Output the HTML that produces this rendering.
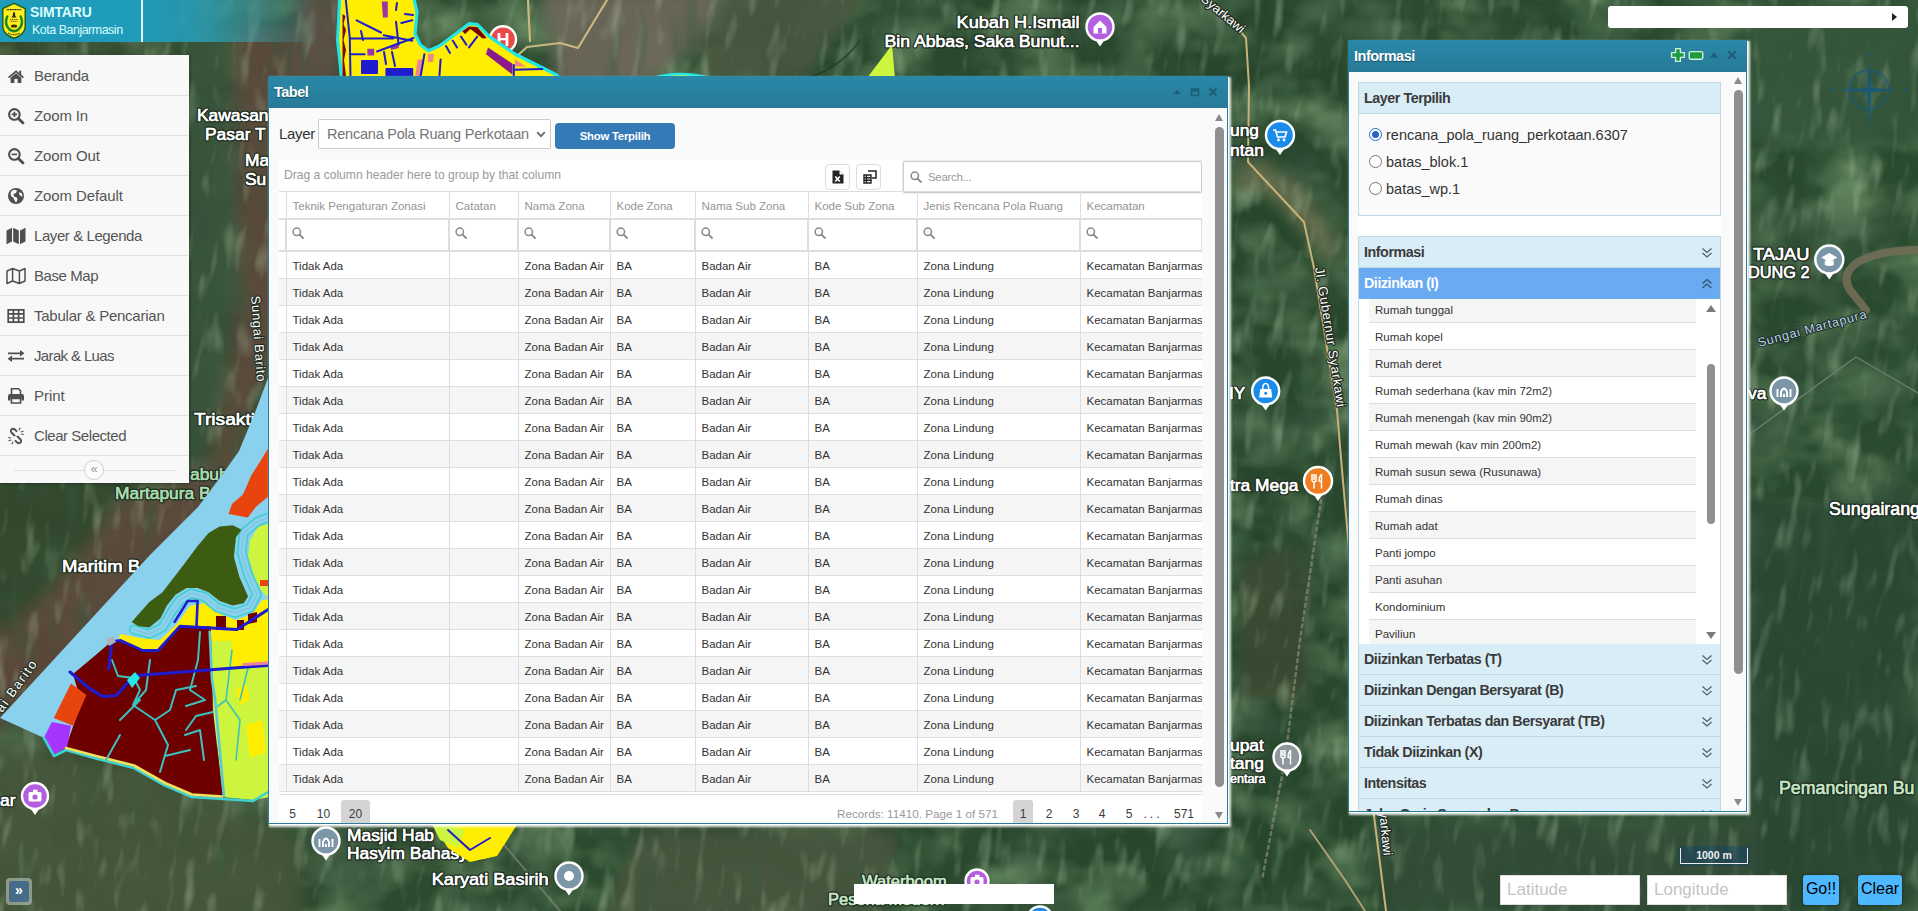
<!DOCTYPE html>
<html lang="id">
<head>
<meta charset="utf-8">
<title>SIMTARU Kota Banjarmasin</title>
<style>
*{box-sizing:border-box;margin:0;padding:0}
html,body{width:1918px;height:911px;overflow:hidden;background:#2f4a33;font-family:"Liberation Sans",sans-serif;}
#map{position:absolute;left:0;top:0;width:1918px;height:911px;}
#map svg{display:block}
.m2{font-family:"Liberation Sans",sans-serif;stroke-width:.45px}
.ml{font-family:"Liberation Sans",sans-serif;fill:#fff;stroke:#1d2a1f;stroke-width:3px;paint-order:stroke fill;stroke-linejoin:round}

/* header */
#hdr{position:absolute;left:0;top:0;width:330px;height:42px;background:linear-gradient(90deg,#1f9bbb 0,#1f9bbb 142px,rgba(31,155,187,.95) 145px,rgba(40,160,185,.85) 200px,rgba(60,165,180,.55) 250px,rgba(80,160,160,0) 320px);}
#hdr .div{position:absolute;left:141px;top:0;width:2px;height:42px;background:#e8f4f7}
#hdr .t1{position:absolute;left:30px;top:4px;font-size:14px;font-weight:bold;color:#d9fdff;letter-spacing:-.15px}
#hdr .t2{position:absolute;left:32px;top:23px;font-size:12.4px;color:#d9fdff;letter-spacing:-.45px}
#logo{position:absolute;left:0;top:0}

/* sidebar */
#side{position:absolute;left:0;top:55px;width:189px;height:428px;padding-top:1px;background:#f8f8f8;box-shadow:1px 1px 3px rgba(0,0,0,.35)}
#side .it{position:relative;height:40px;border-bottom:1px solid #e2e2e2;color:#555;font-size:15px;line-height:40px;padding-left:34px;white-space:nowrap}
#side .it svg{position:absolute;left:7px;top:11px}
#side .ft{position:relative;height:28px}
#side .ft .ln{position:absolute;left:14px;right:14px;top:14px;height:1px;background:#e2e2e2}
#side .ft .bt{position:absolute;left:84px;top:4px;width:20px;height:20px;border-radius:50%;background:#fcfcfc;border:1px solid #cfcfcf;color:#999;font-size:13px;line-height:16px;text-align:center}

/* windows */
.win{position:absolute;background:#fafafa;border:1px solid #2a7d9a;border-top:none;box-shadow:1px 1px 0 #fbfdfd,2px 2px 2px 1px rgba(255,255,255,.85);overflow:hidden}
.win .tb{position:absolute;left:0;top:0;right:0;height:32px;background:linear-gradient(#2b88a8,#267a98)}
.win .tt{position:absolute;left:5px;top:8px;font-size:14.5px;font-weight:bold;color:#fff;letter-spacing:-.5px;text-shadow:0 1px 1px rgba(0,0,0,.4)}
.win .wi{position:absolute;top:11px}
#tabel{left:268px;top:76px;width:960px;height:748px}
#tabel .bd{position:absolute;left:0;top:32px;right:0;bottom:0}
#tabel .lb{position:absolute;left:10px;top:17px;font-size:15px;color:#333;letter-spacing:-.35px}
#tabel .sel{position:absolute;left:49px;top:11px;width:233px;height:30px;border:1px solid #ccc;border-radius:2px;background:#fff;color:#757575;font-size:14.5px;line-height:29px;padding-left:8px;white-space:nowrap;letter-spacing:-.22px}
#tabel .sel svg{position:absolute;right:4px;top:11px}
#tabel .btn{position:absolute;left:286px;top:15px;width:120px;height:26px;background:#337ab7;border-radius:4px;color:#fff;font-size:11.4px;font-weight:bold;line-height:27px;text-align:center;letter-spacing:-.25px}
#tabel .grid{position:absolute;left:10px;top:52px;width:923px;height:700px;background:#fff;overflow:hidden;font-size:11.5px}
.drag{position:absolute;left:5px;top:8px;color:#999;font-size:12.1px}
.eb{position:absolute;top:4px;width:25px;height:26px;border:1px solid #ddd;border-radius:4px;background:#fff}
.eb svg{position:absolute;left:6px;top:5px}
.srch{position:absolute;left:624px;top:1px;width:299px;height:32px;border:1px solid #ccc;border-radius:2px;background:#fff;box-shadow:0 0 0 1px #eee;color:#999;line-height:30px}
.srch .mg{position:absolute;left:6px;top:9px}
.srch span{position:absolute;left:24px;top:0;letter-spacing:-.3px}
#tabel table{position:absolute;left:0;top:31px;width:923px;border-collapse:collapse;table-layout:fixed}
#tabel td,#tabel th{border-left:1px solid #ddd;border-top:1px solid #ddd;padding:2px 0 0 6px;height:27px;white-space:nowrap;overflow:hidden;text-align:left;font-weight:normal;color:#333;font-size:11.5px}
#tabel td:first-child,#tabel th:first-child{border-left:none}
#tabel th{color:#959595;height:27px}
#tabel tr.f td{height:32px;padding:0;border:2px solid #ddd;border-left-width:2px;background:#fff}
#tabel tr.f td:first-child{border-left:none;border-right:none;background:#fff}
#tabel tr.a td{background:#f5f5f5}
#tabel tbody tr:last-child td{border-bottom:1px solid #ddd}
#tabel tbody tr:first-child td{height:28px}
.fb{position:relative;height:28px}
.fb .mg{position:absolute;left:5px;top:6px}
.pg{position:absolute;left:0;top:634px;width:923px;height:40px;border-top:1px solid #ddd;color:#3c3c3c;font-size:12px}
.pg span{position:absolute;top:5px;height:30px;line-height:28px;text-align:center}
.pg .ps{width:29px}.pg .pn{width:20px}
.pg .on{background:#d4d4d4;border-radius:3px}
.pg .inf{left:539px;color:#999;width:180px;text-align:right;white-space:nowrap;font-size:11.7px}
.sb{position:absolute;right:3px;top:4px;width:12px;bottom:2px}
.sb i{position:absolute;display:block}
.sb .up{left:3px;top:2px;border:4.5px solid transparent;border-bottom:7px solid #8a8a8a;border-top:none}
.sb .dn{left:3px;bottom:2px;border:4.5px solid transparent;border-top:7px solid #8a8a8a;border-bottom:none}
.sb .th{left:3px;width:9px;border-radius:4.5px;background:#8f8f8f}

#info{left:1348px;top:40px;width:399px;height:772px}
#info .bd{position:absolute;left:0;top:32px;right:0;bottom:0;overflow:hidden}
#info .pn1{position:absolute;left:9px;top:10px;width:363px;height:134px;border:1px solid #bcd9e4;background:#fafafa}
#info .ph{height:31px;background:#d9edf7;border-bottom:1px solid #bcd9e4;font-size:14.3px;font-weight:bold;color:#3a3a3a;line-height:30px;padding-left:5px;letter-spacing:-.45px}
#info .rd{position:absolute;left:27px;font-size:14.5px;color:#333;line-height:20px;white-space:nowrap}
#info .rd .r{position:absolute;left:-17px;top:3px;width:13px;height:13px;border:1px solid #767676;border-radius:50%;background:#fff}
#info .rd .r.on{border-color:#2a65c4}
#info .rd .r.on:after{content:"";position:absolute;left:2px;top:2px;width:7px;height:7px;border-radius:50%;background:#2a65c4}
#info .acc{position:absolute;left:9px;top:164px;width:363px;border:1px solid #bcd9e4;border-bottom:none;background:#fff}
#info .ah{position:relative;height:31px;background:#d9edf7;border-bottom:1px solid #bcd9e4;font-size:14.3px;font-weight:bold;color:#3a3a3a;line-height:30px;padding-left:5px;letter-spacing:-.45px;white-space:nowrap}
#info .ah.sel{background:#69aaf0;color:#fff;border-bottom-color:#69aaf0}
#info .cv{position:absolute;right:7px;top:10px}
#info .lst{position:relative;height:345px;overflow:hidden;background:#fff}
#info .lw{position:absolute;left:10px;top:-3px;width:327px}
#info .li{height:27px;border-bottom:1px solid #ddd;font-size:11.5px;color:#333;line-height:28px;padding-left:6px;background:#fff}
#info .li.a{background:#f5f5f5}
.sb2{position:absolute;right:4px;top:0;width:10px;bottom:0}
.sb2 i{position:absolute;display:block}
.sb2 .up{left:0;top:6px;border:5px solid transparent;border-bottom:7px solid #7a7a7a;border-top:none}
.sb2 .dn{left:0;bottom:5px;border:5px solid transparent;border-top:7px solid #7a7a7a;border-bottom:none}
.sb2 .th{left:1px;top:65px;width:8px;height:160px;border-radius:4px;background:#8f8f8f}
#info .sb{right:3px;top:5px;bottom:5px;width:10px}
#info .sb .th{width:9px}
#info .sb .up{left:1px;top:0;border-width:0 4.5px 7px 4.5px}
#info .sb .dn{left:1px;bottom:0;border-width:7px 4.5px 0 4.5px}
#info .sb .th{left:1px}

#topbox{position:absolute;left:1608px;top:6px;width:300px;height:22px;background:#fff;border-radius:3px}
#topbox i{position:absolute;right:11px;top:7px;border:4px solid transparent;border-left:5px solid #222;border-right:none}
#compass{position:absolute;left:1834px;top:50px;overflow:visible}
#scale{position:absolute;left:1678px;top:846px;width:72px;height:20px;background:rgba(0,60,136,.3);border-radius:4px;padding:2px}
#scale div{width:68px;height:16px;border:1px solid #eee;border-top:none;color:#eee;font-size:10.5px;font-weight:bold;text-align:center;line-height:15px}
.ll{position:absolute;top:875px;width:140px;height:30px;background:#fff;border:1px solid #ddd;color:#c4c4c4;font-size:17px;line-height:28px;padding-left:6px}
#lat{left:1500px}#lon{left:1647px}
.bb{position:absolute;top:875px;height:30px;background:#4db8ff;border-radius:3px;color:#000;font-size:16px;line-height:28px;text-align:center;box-shadow:0 0 3px rgba(0,0,0,.5)}
#go{left:1803px;width:36px}#clr{left:1858px;width:44px}
#botbox{position:absolute;left:854px;top:884px;width:200px;height:20px;background:#fff}
#ovb{position:absolute;left:6px;top:878px;width:26px;height:27px;background:rgba(255,255,255,.4);border-radius:4px;padding:3px}
#ovb div{width:20px;height:21px;background:rgba(0,60,136,.5);border-radius:2px;color:#fff;font-weight:bold;font-size:14px;line-height:19px;text-align:center}
</style>
</head>
<body>
<div id="map">
<svg width="1918" height="911" viewBox="0 0 1918 911">
<defs>
<linearGradient id="gbg" x1="0" y1="0" x2="1" y2="0">
<stop offset="0" stop-color="#38472d"/><stop offset=".12" stop-color="#2f4a2f"/><stop offset=".3" stop-color="#2b4a2e"/><stop offset=".65" stop-color="#27462c"/><stop offset="1" stop-color="#2a4a2f"/>
</linearGradient>
<filter id="bl8" x="-20%" y="-20%" width="140%" height="140%"><feGaussianBlur stdDeviation="8"/></filter>
<filter id="bl3" x="-20%" y="-20%" width="140%" height="140%"><feGaussianBlur stdDeviation="3"/></filter>
<filter id="bl1"><feGaussianBlur stdDeviation="0.7"/></filter>
<filter id="nz" x="0" y="0" width="100%" height="100%"><feTurbulence type="fractalNoise" baseFrequency="0.016 0.022" numOctaves="3" seed="7" result="n"/><feColorMatrix in="n" type="matrix" values="0 0 0 0 0.26  0 0 0 0 0.43  0 0 0 0 0.22  1.9 1.3 0 0 -1.38"/></filter>
<filter id="nz2" x="0" y="0" width="100%" height="100%"><feTurbulence type="fractalNoise" baseFrequency="0.014 0.02" numOctaves="3" seed="3" result="n"/><feColorMatrix in="n" type="matrix" values="0 0 0 0 0.06  0 0 0 0 0.12  0 0 0 0 0.07  -2.4 0 0 0 1.25"/></filter>
<filter id="nzw" x="0" y="0" width="100%" height="100%"><feTurbulence type="fractalNoise" baseFrequency="0.075 0.022" numOctaves="2" seed="11" result="n"/><feColorMatrix in="n" type="matrix" values="0 0 0 0 0.46  0 0 0 0 0.60  0 0 0 0 0.40  3.0 0 0 0 -1.68"/></filter>
<filter id="nzb" x="0" y="0" width="100%" height="100%"><feTurbulence type="fractalNoise" baseFrequency="0.05 0.012" numOctaves="2" seed="23" result="n"/><feColorMatrix in="n" type="matrix" values="0 0 0 0 0.04  0 0 0 0 0.10  0 0 0 0 0.05  -2.6 0 0 0 1.2"/></filter>
</defs>
<rect width="1918" height="911" fill="url(#gbg)"/>
<!-- MAPBG-S -->
<rect width="1918" height="911" filter="url(#nz)" opacity=".55"/>
<rect width="1918" height="911" filter="url(#nz2)" opacity=".6"/>
<g filter="url(#bl8)" opacity=".92">
<path d="M236 30 L240 290 L226 390 L208 466 L160 488 L120 500 L85 550 L40 600 L-20 650 L-20 740 L120 640 L230 480 L290 300 L345 30 Z" fill="#5b4a3a"/>
<path d="M-20 470 L150 470 L110 500 L75 550 L30 600 L-20 640 Z" fill="#30482f"/>
<path d="M180 30 L230 30 L234 290 L220 390 L202 462 L180 475 Z" fill="#37523a"/>
<path d="M-20 745 L120 765 L300 835 L300 930 L-20 930 Z" fill="#44573a"/>
<path d="M300 -10 L345 -10 L340 80 L290 80 Z" fill="#5d5044"/>
<path d="M540 -10 L720 -10 L700 40 L640 90 L560 90 Z" fill="#6e675a"/>
<path d="M720 -10 L870 -10 L800 80 L700 80 Z" fill="#48573f"/>
<path d="M640 830 L900 830 L880 920 L600 920 Z" fill="#46553d"/>
<path d="M1236 168 L1262 160 L1300 186 L1342 246 L1326 262 L1290 216 L1262 190 L1236 190 Z" fill="#687050"/>
<path d="M1240 560 L1300 540 L1310 700 L1240 700 Z" fill="#3a4a33"/>
<path d="M1750 0 L1918 0 L1918 140 L1750 140 Z" fill="#36563a"/>
<path d="M1750 500 L1918 500 L1918 911 L1750 911 Z" fill="#2a4731"/>
<path d="M1380 820 L1760 820 L1760 911 L1380 911 Z" fill="#304c36"/>
</g>
<g transform="rotate(7 960 455)"><rect x="-100" y="-150" width="2120" height="1220" filter="url(#nzw)" opacity=".38"/></g>
<rect width="1918" height="911" filter="url(#nzb)" opacity=".6"/>
<g fill="none" stroke-linecap="round" stroke-linejoin="round">
<path d="M1918 250 Q1880 250 1858 262 Q1840 274 1850 290 L1866 310" stroke="#716e57" stroke-width="8" filter="url(#bl1)" opacity=".9"/>
<path d="M1750 434 L1856 357 L1918 393" stroke="#6d7f6d" stroke-width="1.4"/>
<path d="M1321 500 L1300 640 L1285 760 L1262 880" stroke="#8a8873" stroke-width="2.5" stroke-dasharray="3 4" opacity=".7"/>
<path d="M1208 0 L1232 22 L1246 38 L1249 86 L1248 162 L1304 222 L1314 268 L1337 410 L1342 470 L1350 560 L1372 800 L1386 911" stroke="#c9b27a" stroke-width="2"/>
<path d="M528 0 L530 41 M607 0 L578 48 L560 43 L527 47 L517 56" stroke="#c9b882" stroke-width="2.2"/>
<path d="M1310 830 L1345 880 L1365 911" stroke="#c9b27a" stroke-width="2" opacity=".8"/>
<path d="M500 840 L560 911" stroke="#8a8f80" stroke-width="2" opacity=".6"/>
<path d="M860 40 Q840 70 800 80" stroke="#22382a" stroke-width="2" opacity=".7"/>
</g>
<!-- MAPBG-E -->
<!-- MAPLBL-S -->
<text class="ml" x="956.6" y="28" font-size="17.4" textLength="123" lengthAdjust="spacingAndGlyphs" style="fill:#fff;stroke-width:3px">Kubah H.Ismail</text><text class="m2" x="956.6" y="28" font-size="17.4" textLength="123" lengthAdjust="spacingAndGlyphs" style="fill:#fff;stroke:#fff">Kubah H.Ismail</text>
<text class="ml" x="884.6" y="47" font-size="17.4" textLength="195" lengthAdjust="spacingAndGlyphs" style="fill:#fff;stroke-width:3px">Bin Abbas, Saka Bunut...</text><text class="m2" x="884.6" y="47" font-size="17.4" textLength="195" lengthAdjust="spacingAndGlyphs" style="fill:#fff;stroke:#fff">Bin Abbas, Saka Bunut...</text>
<text class="ml" x="197" y="121" font-size="17.4" style="fill:#fff;stroke-width:3px">Kawasan</text><text class="m2" x="197" y="121" font-size="17.4" style="fill:#fff;stroke:#fff">Kawasan</text>
<text class="ml" x="205" y="140" font-size="17.4" style="fill:#fff;stroke-width:3px">Pasar T</text><text class="m2" x="205" y="140" font-size="17.4" style="fill:#fff;stroke:#fff">Pasar T</text>
<text class="ml" x="245" y="166" font-size="17.4" style="fill:#fff;stroke-width:3px">Ma</text><text class="m2" x="245" y="166" font-size="17.4" style="fill:#fff;stroke:#fff">Ma</text>
<text class="ml" x="245" y="185" font-size="17.4" style="fill:#fff;stroke-width:3px">Su</text><text class="m2" x="245" y="185" font-size="17.4" style="fill:#fff;stroke:#fff">Su</text>
<text class="ml" x="194" y="424.5" font-size="17.4" textLength="61" lengthAdjust="spacingAndGlyphs" style="fill:#fff;stroke-width:3px">Trisakti</text><text class="m2" x="194" y="424.5" font-size="17.4" textLength="61" lengthAdjust="spacingAndGlyphs" style="fill:#fff;stroke:#fff">Trisakti</text>
<text class="ml" x="190" y="480" font-size="17.4" style="fill:#a9dcae;stroke-width:3px">abuh</text><text class="m2" x="190" y="480" font-size="17.4" style="fill:#a9dcae;stroke:#a9dcae">abuh</text>
<text class="ml" x="115" y="499" font-size="17.4" style="fill:#a9dcae;stroke-width:3px">Martapura B</text><text class="m2" x="115" y="499" font-size="17.4" style="fill:#a9dcae;stroke:#a9dcae">Martapura B</text>
<text class="ml" x="62" y="572" font-size="17.4" textLength="78" lengthAdjust="spacingAndGlyphs" style="fill:#fff;stroke-width:3px">Maritim B</text><text class="m2" x="62" y="572" font-size="17.4" textLength="78" lengthAdjust="spacingAndGlyphs" style="fill:#fff;stroke:#fff">Maritim B</text>
<text class="ml" x="1230" y="136" font-size="17.4" style="fill:#fff;stroke-width:3px">ung</text><text class="m2" x="1230" y="136" font-size="17.4" style="fill:#fff;stroke:#fff">ung</text>
<text class="ml" x="1230" y="156" font-size="17.4" style="fill:#fff;stroke-width:3px">ntan</text><text class="m2" x="1230" y="156" font-size="17.4" style="fill:#fff;stroke:#fff">ntan</text>
<text class="ml" x="1229" y="399" font-size="17.4" style="fill:#fff;stroke-width:3px">IY</text><text class="m2" x="1229" y="399" font-size="17.4" style="fill:#fff;stroke:#fff">IY</text>
<text class="ml" x="1230" y="490.5" font-size="17.4" textLength="68.5" lengthAdjust="spacingAndGlyphs" style="fill:#fff;stroke-width:3px">tra Mega</text><text class="m2" x="1230" y="490.5" font-size="17.4" textLength="68.5" lengthAdjust="spacingAndGlyphs" style="fill:#fff;stroke:#fff">tra Mega</text>
<text class="ml" x="1230" y="751" font-size="17.4" style="fill:#fff;stroke-width:3px">upat</text><text class="m2" x="1230" y="751" font-size="17.4" style="fill:#fff;stroke:#fff">upat</text>
<text class="ml" x="1230" y="769" font-size="17.4" style="fill:#fff;stroke-width:3px">tang</text><text class="m2" x="1230" y="769" font-size="17.4" style="fill:#fff;stroke:#fff">tang</text>
<text class="ml" x="1230" y="783" font-size="12.5" style="fill:#fff;stroke-width:2.5px">entara</text><text class="m2" x="1230" y="783" font-size="12.5" style="fill:#fff;stroke:#fff">entara</text>
<text class="ml" x="1753" y="260" font-size="17.4" textLength="56.5" lengthAdjust="spacingAndGlyphs" style="fill:#fff;stroke-width:3px">TAJAU</text><text class="m2" x="1753" y="260" font-size="17.4" textLength="56.5" lengthAdjust="spacingAndGlyphs" style="fill:#fff;stroke:#fff">TAJAU</text>
<text class="ml" x="1748" y="278" font-size="17.4" textLength="61.5" lengthAdjust="spacingAndGlyphs" style="fill:#fff;stroke-width:3px">DUNG 2</text><text class="m2" x="1748" y="278" font-size="17.4" textLength="61.5" lengthAdjust="spacingAndGlyphs" style="fill:#fff;stroke:#fff">DUNG 2</text>
<text class="ml" x="1748" y="399" font-size="17.4" style="fill:#fff;stroke-width:3px">va</text><text class="m2" x="1748" y="399" font-size="17.4" style="fill:#fff;stroke:#fff">va</text>
<text class="ml" x="1829" y="515" font-size="17.8" style="fill:#fff;stroke-width:3px">Sungairang</text><text class="m2" x="1829" y="515" font-size="17.8" style="fill:#fff;stroke:#fff">Sungairang</text>
<text class="ml" x="1779" y="794" font-size="17.8" style="fill:#c4e3c4;stroke-width:3px">Pemancingan Bu</text><text class="m2" x="1779" y="794" font-size="17.8" style="fill:#c4e3c4;stroke:#c4e3c4">Pemancingan Bu</text>
<text class="ml" x="347" y="841" font-size="17.4" style="fill:#fff;stroke-width:3px">Masjid Hab</text><text class="m2" x="347" y="841" font-size="17.4" style="fill:#fff;stroke:#fff">Masjid Hab</text>
<text class="ml" x="347" y="859" font-size="17.4" style="fill:#fff;stroke-width:3px">Hasyim Bahasyim</text><text class="m2" x="347" y="859" font-size="17.4" style="fill:#fff;stroke:#fff">Hasyim Bahasyim</text>
<text class="ml" x="431.7" y="885" font-size="17.4" textLength="117" lengthAdjust="spacingAndGlyphs" style="fill:#fff;stroke-width:3px">Karyati Basirih</text><text class="m2" x="431.7" y="885" font-size="17.4" textLength="117" lengthAdjust="spacingAndGlyphs" style="fill:#fff;stroke:#fff">Karyati Basirih</text>
<text class="ml" x="862" y="887" font-size="16.5" style="fill:#c4e3c4;stroke-width:3px">Waterboom</text><text class="m2" x="862" y="887" font-size="16.5" style="fill:#c4e3c4;stroke:#c4e3c4">Waterboom</text>
<text class="ml" x="828" y="905" font-size="16.5" style="fill:#c4e3c4;stroke-width:3px">Pesona Modern</text><text class="m2" x="828" y="905" font-size="16.5" style="fill:#c4e3c4;stroke:#c4e3c4">Pesona Modern</text>
<text class="ml" x="0" y="806" font-size="17.4" style="fill:#fff;stroke-width:3px">ar</text><text class="m2" x="0" y="806" font-size="17.4" style="fill:#fff;stroke:#fff">ar</text>
<text class="ml" transform="translate(251,296) rotate(86)" font-size="13" textLength="86" lengthAdjust="spacing" style="fill:#fff;stroke-width:2.2px">Sungai Barito</text>
<text class="ml" transform="translate(2,713) rotate(-54)" font-size="13" textLength="60" lengthAdjust="spacing" style="fill:#fff;stroke-width:2.2px">ai Barito</text>
<text class="ml" transform="translate(1315,268) rotate(81)" font-size="13" textLength="141" lengthAdjust="spacing" style="fill:#fff;stroke-width:2.4px">Jl. Gubernur Syarkawi</text>
<text class="ml" transform="translate(1200,0) rotate(40)" font-size="13" style="fill:#fff;stroke-width:2.4px">Syarkawi</text>
<text class="ml" transform="translate(1379,812) rotate(84)" font-size="13" style="fill:#fff;stroke-width:2.4px">yarkawi</text>
<text class="ml" transform="translate(1759,347) rotate(-15)" font-size="12.5" textLength="112" lengthAdjust="spacing" style="fill:#b5d2ea;stroke-width:2px">Sungai Martapura</text>
<g transform="translate(1280,135)"><path d="M-7 10 L0 20 L7 10 Z" fill="#fff"/><circle r="14" fill="#1a8be8" stroke="#fff" stroke-width="2.4"/><path d="M-7 -5 H-4.500 L-2.500 2 H5 L6.500 -3 H-3.500" fill="none" stroke="#fff" stroke-width="1.700"/><circle cx="-1.500" cy="5" r="1.400" fill="#fff"/><circle cx="4" cy="5" r="1.400" fill="#fff"/></g>
<g transform="translate(1265.7,391)"><path d="M-7 9.5 L0 19.5 L7 9.5 Z" fill="#fff"/><circle r="13.5" fill="#1a8be8" stroke="#fff" stroke-width="2.4"/><path d="M-5.500 -2 H5.500 L6.500 6.500 H-6.500 Z" fill="#fff"/><path d="M-3 -2 Q-3 -7.500 0 -7.500 Q3 -7.500 3 -2" fill="none" stroke="#fff" stroke-width="1.500"/><circle cy="2.300" r="1.500" fill="#1a8be8"/></g>
<g transform="translate(1318,481)"><path d="M-7 10 L0 20 L7 10 Z" fill="#fff"/><circle r="14" fill="#f07d1f" stroke="#fff" stroke-width="2.4"/><path d="M-4 -7 V-1 M-2 -7 V-1 M-6 -7 V-1 Q-6 1 -4 1 Q-2 1 -2 -1 M-4 1 V7.500 M3.500 -7 Q1 -4 1 0 L3.500 1 V7.500 M3.500 -7 V1" fill="none" stroke="#fff" stroke-width="1.500"/></g>
<g transform="translate(1287,757)"><path d="M-7 9.5 L0 19.5 L7 9.5 Z" fill="#fff"/><circle r="13.5" fill="#8d979c" stroke="#fff" stroke-width="2.4"/><path d="M-4 -7 V-1 M-2 -7 V-1 M-6 -7 V-1 Q-6 1 -4 1 Q-2 1 -2 -1 M-4 1 V7.500 M3.500 -7 Q1 -4 1 0 L3.500 1 V7.500 M3.500 -7 V1" fill="none" stroke="#fff" stroke-width="1.500"/></g>
<g transform="translate(1829.3,259.5)"><path d="M-7 10 L0 20 L7 10 Z" fill="#fff"/><circle r="14" fill="#7b97a7" stroke="#fff" stroke-width="2.4"/><path d="M-8 -2 L0 -6.500 L8 -2 L0 2.500 Z" fill="#fff"/><path d="M-4.500 1 V5.500 Q0 7.500 4.500 5.500 V1" fill="#fff"/></g>
<g transform="translate(1784,391)"><path d="M-7 9.5 L0 19.5 L7 9.5 Z" fill="#fff"/><circle r="13.5" fill="#7b97a7" stroke="#fff" stroke-width="2.4"/><path d="M-6.500 6 V-2 M6.500 6 V-2 M-3 6 V1 Q0 -6 3 1 V6 M0 6 V3" fill="none" stroke="#fff" stroke-width="1.900"/></g>
<g transform="translate(1100,27)"><path d="M-7 9.5 L0 19.5 L7 9.5 Z" fill="#fff"/><circle r="13.5" fill="#b45fe0" stroke="#fff" stroke-width="2.4"/><path d="M-6.500 0 L0 -6.500 L6.500 0 V6.500 H-6.500 Z" fill="#fff"/><rect x="-2" y="1" width="4" height="5.500" fill="#b45fe0"/></g>
<g transform="translate(35,796)"><path d="M-7 9 L0 19 L7 9 Z" fill="#fff"/><circle r="13" fill="#b45fe0" stroke="#fff" stroke-width="2.4"/><rect x="-6.500" y="-4" width="13" height="9.500" rx="1.500" fill="#fff"/><circle cy="1" r="2.600" fill="#b45fe0"/><rect x="-2" y="-6.300" width="4.500" height="2.600" fill="#fff"/></g>
<g transform="translate(326,841)"><path d="M-7 9.5 L0 19.5 L7 9.5 Z" fill="#fff"/><circle r="13.5" fill="#7b97a7" stroke="#fff" stroke-width="2.4"/><path d="M-6.500 6 V-2 M6.500 6 V-2 M-3 6 V1 Q0 -6 3 1 V6 M0 6 V3" fill="none" stroke="#fff" stroke-width="1.900"/></g>
<g transform="translate(569,876)"><path d="M-7 9.5 L0 19.5 L7 9.5 Z" fill="#fff"/><circle r="13.5" fill="#7b97a7" stroke="#fff" stroke-width="2.4"/><circle r="5" fill="#fff"/></g>
<g transform="translate(977,881)"><path d="M-7 7.5 L0 17.5 L7 7.5 Z" fill="#fff"/><circle r="11.5" fill="#b45fe0" stroke="#fff" stroke-width="2.4"/><rect x="-6.500" y="-4" width="13" height="9.500" rx="1.500" fill="#fff"/><circle cy="1" r="2.600" fill="#b45fe0"/><rect x="-2" y="-6.300" width="4.500" height="2.600" fill="#fff"/></g>
<g transform="translate(1040,919)"><path d="M-7 8.5 L0 18.5 L7 8.5 Z" fill="#fff"/><circle r="12.5" fill="#1a8be8" stroke="#fff" stroke-width="2.4"/></g>
<g transform="translate(503,39.3)"><circle r="13" fill="#e84a4a" stroke="#fff" stroke-width="2.4"/><text x="0" y="6.5" text-anchor="middle" font-family="Liberation Sans, sans-serif" font-size="18" font-weight="bold" fill="#fff">H</text></g>
<!-- MAPLBL-E -->
<!-- MAPZONE-S -->
<g stroke-linejoin="round" stroke-linecap="round">
<!-- lower-left zoning -->
<path d="M268 378 L256 410 L239 451 L222 475 L198 507 L150 555 L0 718 L42 737 L60 745 L300 745 L300 378 Z" fill="#8ad1ee"/>
<path d="M209 640 L300 640 L300 792 L253 800 L223 797 L213 710 Z" fill="#cdf53e"/>
<path d="M272 522 L258 527 L250 540 L248 556 L254 576 L262 592 L272 600 Z" fill="#cdf53e"/>
<path d="M120 634 L140 638 L160 640 L176 625 L190 606 L205 603 L220 614 L236 620 L252 614 L262 600 L300 596 L300 666 L232 667 L232 641 L209 641 L209 628 L181 628 L158 651.500 L142.700 651.500 L118 643 Z" fill="#ffee00"/>
<path d="M246 725 L262 720 L266 752 L250 758 Z M236 690 L246 684 L250 700 L240 705 Z" fill="#ffee00"/>
<path d="M260 580 L272 580 L272 586 L260 586 Z" fill="#e8450e"/>
<path d="M133.900 629.600 L149.300 634 L162.500 627.400 L171.300 612 L180 600 L191 593.300 L204.200 596.600 L217.400 607.600 L235 613.100 L250.300 607.600 L256.900 594.400 L248.100 574.700 L241.600 552.700 L243.700 532.900 L256.900 522 L272 516" fill="none" stroke="#45cfd2" stroke-width="10"/>
<path d="M133.900 629.600 L149.300 634 L162.500 627.400 L171.300 612 L180 600 L191 593.300 L204.200 596.600 L217.400 607.600 L235 613.100 L250.300 607.600 L256.900 594.400 L248.100 574.700 L241.600 552.700 L243.700 532.900 L256.900 522 L272 516" fill="none" stroke="#8ad1ee" stroke-width="6.500"/>
<path d="M133.900 629.600 L149.300 634 L162.500 627.400 L171.300 612 L180 600 L191 593.300 L204.200 596.600 L217.400 607.600 L235 613.100 L250.300 607.600 L256.900 594.400 L248.100 574.700 L241.600 552.700 L243.700 532.900 L256.900 522 L272 516" fill="none" stroke="#6fa8c0" stroke-width=".6" opacity=".7"/>
<path d="M131.700 621.900 L149.300 602.100 L162.500 592.200 L184.400 563.700 L197.600 546.100 L208.600 532.900 L219.600 526.400 L232.800 525.300 L241.600 529.700 L236 537.300 L233.900 557.100 L239.400 576.900 L248.100 596.600 L243.700 603.200 L232.800 605.400 L219.600 601 L208.600 592.200 L197.600 587.900 L186.600 587.900 L175.700 594.400 L166.900 605.400 L160.300 618.600 L149.300 627.400 L138.300 626.300 Z" fill="#3c5c12"/>
<path d="M73 674 L96 654.700 L112 641 L120.700 640.600 L142.700 650.500 L158 650.500 L180 626.300 L210.800 626.300 L213 710.400 L222.700 796.800 L192 795 L165 783.400 L134.400 766 L96 756.500 L65.300 748.800 L82.600 699 L76.800 687.400 Z" fill="#6f0000"/>
<path d="M216 616 L226 616 L226 630 L216 630 Z M237 620 L244 620 L244 630 L237 630 Z M248 614 L257 612 L257 622 L248 624 Z" fill="#6f0000"/>
<path d="M268 448.700 L251.400 475.300 L243 494.600 L232 504 L228.500 514 L247.800 517.500 L256 506.700 L300 470 L300 448 Z" fill="#e8450e"/>
<path d="M53.800 718 L71 683.500 L86.400 695 L73 725.800 Z" fill="#e8450e"/>
<path d="M44.200 737.300 L51.800 722 L71 725.800 L67.200 746.900 L53.800 754.600 Z" fill="#a733ff"/>
<path d="M44 738 L54 756 L66 750 L96 758.500 L134 768 L165 785.500 L192 797 L223 799 L253 801 L268 792" fill="none" stroke="#3fd0d0" stroke-width="2.600"/>
<path d="M66 748 L96 756 L134 765.500 L165 783 L192 794.500 L222 796.500" fill="none" stroke="#f0e260" stroke-width="2.600"/>
<g fill="none" stroke="#3cc0c0" stroke-width="2">
<path d="M134 678 L140 690 L133 705 L155 720 L168 745 L160 772 M155 720 L170 710 L176 690 L196 686 M200 632 L198 660 L190 690 L205 700 L186 706 M120 735 L106 760 M213 712 L196 716 L186 730 M165 756 L190 750 M140 700 L120 720 M185 735 L200 730 L204 760 M150 660 L146 690 L133 705 M112 660 L118 676 L134 678"/>
<path d="M209.700 631.800 L212 680 L215.200 700 L224 796" stroke="#59c8d8" stroke-width="2.600"/>
<path d="M232 650 L226 700 L240 720 L236 760 M248 668 L240 700 M226 700 L218 706" stroke-width="1.600"/>
</g>
<g fill="none" stroke="#1d1dcf" stroke-width="3">
<path d="M70 672 L90 688.900 L103 696.600 L116.400 695.500 L133.900 675.700 L300 663"/>
<path d="M108.700 669 L112 641.700 L120.700 640.600 L142.700 650.500 L158 650.500 L180 626.300 L237 629.600 L272 607"/>
<path d="M174.600 621.900 L187.700 601 L197.600 601 L196.500 626.300" stroke-width="2.600"/>
</g>
<path d="M244 664.500 L300 661" stroke="#f080a0" stroke-width="3" fill="none"/>
<path d="M127 680 L135 672 L140 678 L132 688 Z" fill="#22e8e8"/>
<path d="M106 640 L113 636 L116 642 L109 646 Z" fill="#b0b0b8"/>
<!-- bottom yellow sliver under table -->
<path d="M430 820 L520 820 L497 856 L470 862 L448 848 Z" fill="#ffee00"/>
<path d="M430 820 L465 830 L458 848 L440 840 Z" fill="#cdf53e"/>
<path d="M448 830 L470 850 L490 838" fill="none" stroke="#1d1dcf" stroke-width="2"/>
<!-- top yellow city -->
<path d="M339.700 -3 L337.600 40.700 L340.300 65 L341.700 80 L560 80 L557.200 75.200 L536.900 65 L515.200 54.200 L489.400 36.600 L477.200 24.400 L469 23.700 L455.600 33.900 L439.300 46 L428.400 50.800 L420.300 44.700 L415 33.900 L417 12.200 L413.500 -3 Z" fill="#ffee00" stroke="#22e6e6" stroke-width="3.2"/>
<path d="M342.500 14 L345.500 16 L343.500 24 L346 30 L343.500 40 L346 50 L344 60 L346 76 L342.500 76 Z" fill="#7a0a0a"/>
<path d="M462.300 31.200 L469 26.400 L477.200 27.100 L486.700 38 L482.700 38.600 L470.500 29.100 L465 33.900 Z" fill="#7a0000"/>
<path d="M488 47.400 L486 54.200 L512.500 74.600 L512.500 63.700 Z" fill="#8b1a8b"/>
<path d="M381.700 1.400 L387.800 1.400 L387.800 17.600 L383 17.600 Z M367.400 48.800 L374.200 48.800 L374.200 55.600 L367.400 55.600 Z M390 46 L398 44 L399 48 L391 50 Z" fill="#9a35a5"/>
<path d="M515 59.600 L526 66.400 L515 66.400 Z M417.600 59.600 L424.400 59.600 L421 78 L415 78 Z M428 54 L434 54 L433 62 L428 62 Z" fill="#f08888"/>
<g fill="none" stroke="#1d1dcf" stroke-width="2">
<path d="M345.800 0 L349.800 38 L350.500 78 M349.800 38.600 L393.200 38.600 M349.800 54.200 L364.700 54.200 M356.600 20.300 L381 32.500 M383.700 35.200 L412.200 40.700 M377 51.500 L413.500 38 M396 21.700 L398.600 44.700 M401.300 23 L412.200 20.300 M424.400 54.200 L420.300 78 M440.600 59.600 L439.300 78 M446 46 L450 52.900 M452.800 40.700 L457 47.400 M461 36.600 L466.400 44.700 M477.200 36.600 L469 47.400 M513.800 65 L513.800 76 M513.800 69.800 L542.300 69 M384 52 L386 64 M392 52 L395 66 M361 31 L363 40 M397 3 L396 10 M405 14 L413 15"/>
<path d="M362 61 L377 61 L377 73 L362 73 Z M386.400 69 L412.200 69 L412.200 78 L386.400 78 Z" fill="#1d1dcf"/>
</g>
<path d="M653 78 Q680 70 710 78 Z" fill="#cdf53e" stroke="#22e6e6" stroke-width="2.5"/>
<path d="M892 45 L867 78 L895 78 Z" fill="#cdf53e"/>
</g>
<!-- MAPZONE-E -->
</svg>
</div>

<div id="hdr">
<svg id="logo" width="28" height="40" viewBox="0 0 28 40"><path d="M14 3.400 L25.200 8.600 V26 Q25.200 32 19.500 35.600 Q16.500 37.600 14 38.200 Q11.500 37.600 8.500 35.600 Q2.800 32 2.800 26 V8.600 Z" fill="#ffee1f" stroke="#1d5c16" stroke-width="1.400" stroke-linejoin="round"/><path d="M7.300 16.500 Q3.800 24 9.500 29.500 Q14 32.800 18.500 29.500 Q24.200 24 20.700 16.500" fill="none" stroke="#1f8a1f" stroke-width="2.500" stroke-linecap="round"/><path d="M13.200 12.200 H14.800 L15.400 16.600 H16.200 V17.600 H11.800 V16.600 H12.600 Z" fill="#222"/><path d="M6.500 9.600 H21.500" stroke="#222" stroke-width="1.200" stroke-dasharray="1.200 .5"/><path d="M10 19.500 H18 M10.500 21.300 H17.500" stroke="#6b5a10" stroke-width="1" stroke-dasharray="1.400 .6"/><path d="M10.800 25.300 Q14 23.600 17.200 25.300 L16.600 27.400 H11.400 Z" fill="#3a3208"/><path d="M8 33 Q14 36.300 20 33" fill="none" stroke="#4a4010" stroke-width="1.300" stroke-dasharray="1.200 .5"/></svg>
<div class="t1">SIMTARU</div>
<div class="t2">Kota Banjarmasin</div>
<div class="div"></div>
</div>

<div id="side">
<div class="it" style="letter-spacing:-0.25px"><svg width="18" height="18" viewBox="0 0 18 18"><path d="M9 3.2 L1 10 L2.2 11.2 L9 5.4 L15.800 11.2 L17 10 L14.200 7.600 V3.800 H12.200 V5.900 Z" fill="#4f4f4f"/><path d="M3.600 10.800 L9 6.300 L14.400 10.800 V16 H10.600 V12 H7.400 V16 H3.600 Z" fill="#4f4f4f"/></svg>Beranda</div>
<div class="it" style="letter-spacing:-0.15px"><svg width="18" height="18" viewBox="0 0 18 18"><circle cx="7.400" cy="7.400" r="5.300" fill="none" stroke="#4f4f4f" stroke-width="2.100"/><path d="M11.400 11.400 L16 16" stroke="#4f4f4f" stroke-width="2.800" stroke-linecap="round"/><path d="M4.700 7.400 H10.100 M7.400 4.700 V10.100" stroke="#4f4f4f" stroke-width="1.700"/></svg>Zoom In</div>
<div class="it" style="letter-spacing:-0.1px"><svg width="18" height="18" viewBox="0 0 18 18"><circle cx="7.400" cy="7.400" r="5.300" fill="none" stroke="#4f4f4f" stroke-width="2.100"/><path d="M11.400 11.400 L16 16" stroke="#4f4f4f" stroke-width="2.800" stroke-linecap="round"/><path d="M4.700 7.400 H10.100" stroke="#4f4f4f" stroke-width="1.700"/></svg>Zoom Out</div>
<div class="it" style="letter-spacing:-0.1px"><svg width="18" height="18" viewBox="0 0 18 18"><circle cx="9" cy="9" r="8" fill="#4f4f4f"/><path d="M5 3.500 Q8 2 10 3.500 L9 6 L6.500 7 L7 9.500 L10 10.500 L10.500 13 L9 15.500 Q7 13 6.500 11 L4 9 L3.500 6 Z" fill="#f8f8f8"/><path d="M12.500 5 L15 6.500 L15.500 9.500 L13.500 9 L12 7 Z" fill="#f8f8f8"/></svg>Zoom Default</div>
<div class="it" style="letter-spacing:-0.42px"><svg width="20" height="18" viewBox="0 0 20 18" style="left:6px"><path d="M0.500 3.500 L6 0.800 V14.500 L0.500 17.200 Z M7.200 0.800 L12.800 3.500 V17.200 L7.200 14.500 Z M14 3.500 L19.500 0.800 V14.500 L14 17.200 Z" fill="#4f4f4f"/></svg>Layer &amp; Legenda</div>
<div class="it" style="letter-spacing:-0.42px"><svg width="20" height="18" viewBox="0 0 20 18" style="left:6px"><path d="M1 4 L6.600 1.500 L13.400 4 L19 1.500 V14 L13.400 16.500 L6.600 14 L1 16.500 Z M6.600 1.500 V14 M13.400 4 V16.500" fill="none" stroke="#4f4f4f" stroke-width="1.500" stroke-linejoin="round"/></svg>Base Map</div>
<div class="it" style="letter-spacing:-0.24px"><svg width="18" height="18" viewBox="0 0 18 18"><path d="M1.200 2.800 H16.800 V15.200 H1.200 Z M1.200 6.800 H16.800 M1.200 11 H16.800 M6.400 2.800 V15.200 M11.600 2.800 V15.200" fill="none" stroke="#4f4f4f" stroke-width="1.700"/></svg>Tabular &amp; Pencarian</div>
<div class="it" style="letter-spacing:-0.64px"><svg width="18" height="18" viewBox="0 0 18 18"><path d="M1 5.500 H13 V3 L17.500 6.200 L13 9.400 V7.200 H1 Z M17 12.500 H5 V15 L0.500 11.800 L5 8.600 V10.800 H17 Z" fill="#4f4f4f"/></svg>Jarak &amp; Luas</div>
<div class="it" style="letter-spacing:-0.05px"><svg width="18" height="18" viewBox="0 0 18 18"><path d="M4.500 7 V1.800 H11.500 L13.500 3.800 V7" fill="none" stroke="#4f4f4f" stroke-width="1.600"/><path d="M1 9 Q1 7 3 7 H15 Q17 7 17 9 V13.500 H14.500 V11.500 H3.500 V13.500 H1 Z" fill="#4f4f4f"/><path d="M4.400 11.500 H13.600 V16 H4.400 Z" fill="none" stroke="#4f4f4f" stroke-width="1.600"/></svg>Print</div>
<div class="it" style="letter-spacing:-0.45px"><svg width="18" height="18" viewBox="0 0 18 18"><path d="M7.500 8.500 L4.500 5.500 Q3 3.800 4.800 2.300 Q6.400 1.200 7.800 2.500 L9.500 4.200 M10.500 9.500 L13.500 12.500 Q15 14.200 13.200 15.700 Q11.600 16.800 10.200 15.500 L8.500 13.800" fill="none" stroke="#4f4f4f" stroke-width="1.900" stroke-linecap="round"/><path d="M12 3.200 L13.200 0.800 M13.800 5 L16.500 4.200 M14 7 L16.800 7.500 M6 14.800 L4.800 17.200 M4.200 13 L1.500 13.800 M4 11 L1.200 10.500" stroke="#4f4f4f" stroke-width="1.100"/></svg>Clear Selected</div>
<div class="ft"><div class="ln"></div><div class="bt">&laquo;</div></div>
</div>

<!--TABEL-S-->
<div id="tabel" class="win">
<div class="tb"><span class="tt">Tabel</span>
<svg class="wi" style="right:45px" width="10" height="10" viewBox="0 0 10 10"><path d="M1 7 L5 3 L9 7 Z" fill="#1d5d76"/></svg>
<svg class="wi" style="right:27px" width="10" height="10" viewBox="0 0 10 10"><path d="M1.5 2 H8.5 V8.5 H1.5 Z M1.5 3.6 H8.5" fill="none" stroke="#1d5d76" stroke-width="1.6"/></svg>
<svg class="wi" style="right:9px" width="10" height="10" viewBox="0 0 10 10"><path d="M1.5 1.5 L8.5 8.5 M8.5 1.5 L1.5 8.5" stroke="#1d5d76" stroke-width="2"/></svg>
</div>
<div class="bd">
<span class="lb">Layer</span>
<div class="sel">Rencana Pola Ruang Perkotaan<svg width="10" height="7" viewBox="0 0 10 7"><path d="M1.200 1.200 L5 5.200 L8.800 1.200" fill="none" stroke="#666" stroke-width="1.700"/></svg></div>
<div class="btn">Show Terpilih</div>
<div class="grid">
<div class="drag">Drag a column header here to group by that column</div>
<div class="eb" style="left:546px"><svg width="12" height="14" viewBox="0 0 12 14"><path d="M0.5 0.5 H7.5 L11.5 4.5 V13.5 H0.5 Z" fill="#222"/><path d="M7.5 0.5 V4.5 H11.5 Z" fill="#fff"/><path d="M3.2 6.5 L7.8 11.5 M7.8 6.5 L3.2 11.5" stroke="#fff" stroke-width="1.7"/></svg></div>
<div class="eb" style="left:577px"><svg width="14" height="14" viewBox="0 0 14 14"><path d="M5 1 H13 V8 H9" fill="none" stroke="#222" stroke-width="1.5"/><path d="M1 5 H8 V13 H1 Z M1 7.7 H8 M1 10.3 H8 M3.5 5 V13" fill="none" stroke="#222" stroke-width="1.4"/></svg></div>
<div class="srch"><svg class="mg" width="12" height="12" viewBox="0 0 12 12"><circle cx="4.8" cy="4.8" r="3.7" fill="none" stroke="#8a8a8a" stroke-width="1.5"/><path d="M7.6 7.6 L11 11" stroke="#8a8a8a" stroke-width="1.8" stroke-linecap="round"/></svg><span>Search...</span></div>
<table>
<colgroup><col style="width:7px"><col style="width:163px"><col style="width:69px"><col style="width:92px"><col style="width:85px"><col style="width:113px"><col style="width:109px"><col style="width:163px"><col style="width:122px"></colgroup>
<thead><tr class="h"><th></th><th>Teknik Pengaturan Zonasi</th><th>Catatan</th><th>Nama Zona</th><th>Kode Zona</th><th>Nama Sub Zona</th><th>Kode Sub Zona</th><th>Jenis Rencana Pola Ruang</th><th>Kecamatan</th></tr>
<tr class="f"><td></td><td><div class="fb"><svg class="mg" width="12" height="12" viewBox="0 0 12 12"><circle cx="4.8" cy="4.8" r="3.7" fill="none" stroke="#8a8a8a" stroke-width="1.5"/><path d="M7.6 7.6 L11 11" stroke="#8a8a8a" stroke-width="1.8" stroke-linecap="round"/></svg></div></td><td><div class="fb"><svg class="mg" width="12" height="12" viewBox="0 0 12 12"><circle cx="4.8" cy="4.8" r="3.7" fill="none" stroke="#8a8a8a" stroke-width="1.5"/><path d="M7.6 7.6 L11 11" stroke="#8a8a8a" stroke-width="1.8" stroke-linecap="round"/></svg></div></td><td><div class="fb"><svg class="mg" width="12" height="12" viewBox="0 0 12 12"><circle cx="4.8" cy="4.8" r="3.7" fill="none" stroke="#8a8a8a" stroke-width="1.5"/><path d="M7.6 7.6 L11 11" stroke="#8a8a8a" stroke-width="1.8" stroke-linecap="round"/></svg></div></td><td><div class="fb"><svg class="mg" width="12" height="12" viewBox="0 0 12 12"><circle cx="4.8" cy="4.8" r="3.7" fill="none" stroke="#8a8a8a" stroke-width="1.5"/><path d="M7.6 7.6 L11 11" stroke="#8a8a8a" stroke-width="1.8" stroke-linecap="round"/></svg></div></td><td><div class="fb"><svg class="mg" width="12" height="12" viewBox="0 0 12 12"><circle cx="4.8" cy="4.8" r="3.7" fill="none" stroke="#8a8a8a" stroke-width="1.5"/><path d="M7.6 7.6 L11 11" stroke="#8a8a8a" stroke-width="1.8" stroke-linecap="round"/></svg></div></td><td><div class="fb"><svg class="mg" width="12" height="12" viewBox="0 0 12 12"><circle cx="4.8" cy="4.8" r="3.7" fill="none" stroke="#8a8a8a" stroke-width="1.5"/><path d="M7.6 7.6 L11 11" stroke="#8a8a8a" stroke-width="1.8" stroke-linecap="round"/></svg></div></td><td><div class="fb"><svg class="mg" width="12" height="12" viewBox="0 0 12 12"><circle cx="4.8" cy="4.8" r="3.7" fill="none" stroke="#8a8a8a" stroke-width="1.5"/><path d="M7.6 7.6 L11 11" stroke="#8a8a8a" stroke-width="1.8" stroke-linecap="round"/></svg></div></td><td><div class="fb"><svg class="mg" width="12" height="12" viewBox="0 0 12 12"><circle cx="4.8" cy="4.8" r="3.7" fill="none" stroke="#8a8a8a" stroke-width="1.5"/><path d="M7.6 7.6 L11 11" stroke="#8a8a8a" stroke-width="1.8" stroke-linecap="round"/></svg></div></td></tr></thead>
<tbody>
<tr><td></td><td>Tidak Ada</td><td></td><td>Zona Badan Air</td><td>BA</td><td>Badan Air</td><td>BA</td><td>Zona Lindung</td><td>Kecamatan Banjarmasin Barat</td></tr>
<tr class="a"><td></td><td>Tidak Ada</td><td></td><td>Zona Badan Air</td><td>BA</td><td>Badan Air</td><td>BA</td><td>Zona Lindung</td><td>Kecamatan Banjarmasin Barat</td></tr>
<tr><td></td><td>Tidak Ada</td><td></td><td>Zona Badan Air</td><td>BA</td><td>Badan Air</td><td>BA</td><td>Zona Lindung</td><td>Kecamatan Banjarmasin Barat</td></tr>
<tr class="a"><td></td><td>Tidak Ada</td><td></td><td>Zona Badan Air</td><td>BA</td><td>Badan Air</td><td>BA</td><td>Zona Lindung</td><td>Kecamatan Banjarmasin Barat</td></tr>
<tr><td></td><td>Tidak Ada</td><td></td><td>Zona Badan Air</td><td>BA</td><td>Badan Air</td><td>BA</td><td>Zona Lindung</td><td>Kecamatan Banjarmasin Barat</td></tr>
<tr class="a"><td></td><td>Tidak Ada</td><td></td><td>Zona Badan Air</td><td>BA</td><td>Badan Air</td><td>BA</td><td>Zona Lindung</td><td>Kecamatan Banjarmasin Barat</td></tr>
<tr><td></td><td>Tidak Ada</td><td></td><td>Zona Badan Air</td><td>BA</td><td>Badan Air</td><td>BA</td><td>Zona Lindung</td><td>Kecamatan Banjarmasin Barat</td></tr>
<tr class="a"><td></td><td>Tidak Ada</td><td></td><td>Zona Badan Air</td><td>BA</td><td>Badan Air</td><td>BA</td><td>Zona Lindung</td><td>Kecamatan Banjarmasin Barat</td></tr>
<tr><td></td><td>Tidak Ada</td><td></td><td>Zona Badan Air</td><td>BA</td><td>Badan Air</td><td>BA</td><td>Zona Lindung</td><td>Kecamatan Banjarmasin Barat</td></tr>
<tr class="a"><td></td><td>Tidak Ada</td><td></td><td>Zona Badan Air</td><td>BA</td><td>Badan Air</td><td>BA</td><td>Zona Lindung</td><td>Kecamatan Banjarmasin Barat</td></tr>
<tr><td></td><td>Tidak Ada</td><td></td><td>Zona Badan Air</td><td>BA</td><td>Badan Air</td><td>BA</td><td>Zona Lindung</td><td>Kecamatan Banjarmasin Barat</td></tr>
<tr class="a"><td></td><td>Tidak Ada</td><td></td><td>Zona Badan Air</td><td>BA</td><td>Badan Air</td><td>BA</td><td>Zona Lindung</td><td>Kecamatan Banjarmasin Barat</td></tr>
<tr><td></td><td>Tidak Ada</td><td></td><td>Zona Badan Air</td><td>BA</td><td>Badan Air</td><td>BA</td><td>Zona Lindung</td><td>Kecamatan Banjarmasin Barat</td></tr>
<tr class="a"><td></td><td>Tidak Ada</td><td></td><td>Zona Badan Air</td><td>BA</td><td>Badan Air</td><td>BA</td><td>Zona Lindung</td><td>Kecamatan Banjarmasin Barat</td></tr>
<tr><td></td><td>Tidak Ada</td><td></td><td>Zona Badan Air</td><td>BA</td><td>Badan Air</td><td>BA</td><td>Zona Lindung</td><td>Kecamatan Banjarmasin Barat</td></tr>
<tr class="a"><td></td><td>Tidak Ada</td><td></td><td>Zona Badan Air</td><td>BA</td><td>Badan Air</td><td>BA</td><td>Zona Lindung</td><td>Kecamatan Banjarmasin Barat</td></tr>
<tr><td></td><td>Tidak Ada</td><td></td><td>Zona Badan Air</td><td>BA</td><td>Badan Air</td><td>BA</td><td>Zona Lindung</td><td>Kecamatan Banjarmasin Barat</td></tr>
<tr class="a"><td></td><td>Tidak Ada</td><td></td><td>Zona Badan Air</td><td>BA</td><td>Badan Air</td><td>BA</td><td>Zona Lindung</td><td>Kecamatan Banjarmasin Barat</td></tr>
<tr><td></td><td>Tidak Ada</td><td></td><td>Zona Badan Air</td><td>BA</td><td>Badan Air</td><td>BA</td><td>Zona Lindung</td><td>Kecamatan Banjarmasin Barat</td></tr>
<tr class="a"><td></td><td>Tidak Ada</td><td></td><td>Zona Badan Air</td><td>BA</td><td>Badan Air</td><td>BA</td><td>Zona Lindung</td><td>Kecamatan Banjarmasin Barat</td></tr>
</tbody></table>
<div class="pg">
<span class="ps" style="left:-1px">5</span><span class="ps" style="left:30px">10</span><span class="ps on" style="left:62px">20</span>
<span class="inf">Records: 11410. Page 1 of 571</span>
<span class="pn on" style="left:734px">1</span><span class="pn" style="left:760px">2</span><span class="pn" style="left:787px">3</span><span class="pn" style="left:813px">4</span><span class="pn" style="left:840px">5</span><span class="pn" style="left:864px;letter-spacing:3px">...</span><span class="pn" style="left:890px;width:30px">571</span>
</div>
</div>
<div class="sb"><i class="up"></i><i class="th" style="top:15px;height:660px"></i><i class="dn"></i></div>
</div>
</div>
<!--TABEL-E-->
<!--INFO-S-->
<div id="info" class="win">
<div class="tb"><span class="tt">Informasi</span>
<svg class="wi" style="left:321px;top:7px" width="16" height="16" viewBox="0 0 16 16"><path d="M5.6 1.6 H10.4 V5.6 H14.4 V10.4 H10.4 V14.4 H5.6 V10.4 H1.6 V5.6 H5.6 Z" fill="#1f9a3e" stroke="#cdeedd" stroke-width="1.4" stroke-linejoin="round"/></svg>
<svg class="wi" style="left:339px;top:10px" width="16" height="11" viewBox="0 0 16 11"><rect x="1.2" y="1.6" width="13.6" height="7.6" rx="1.6" fill="#1f9a3e" stroke="#cdeedd" stroke-width="1.4"/></svg>
<svg class="wi" style="left:360px;top:12px" width="10" height="6" viewBox="0 0 10 6"><path d="M0.5 5.5 L5 0.5 L9.5 5.5 Z" fill="#1d5d76"/></svg>
<svg class="wi" style="left:378px;top:10px" width="10" height="10" viewBox="0 0 10 10"><path d="M1.2 1.2 L8.8 8.8 M8.8 1.2 L1.2 8.8" stroke="#1d5d76" stroke-width="2"/></svg>
</div>
<div class="bd">
<div class="pn1"><div class="ph">Layer Terpilih</div>
<div class="rd" style="top:42px"><i class="r on"></i>rencana_pola_ruang_perkotaan.6307</div>
<div class="rd" style="top:69px"><i class="r"></i>batas_blok.1</div>
<div class="rd" style="top:96px"><i class="r"></i>batas_wp.1</div>
</div>
<div style="position:absolute;left:9px;top:144px;width:363px;height:20px;background:#fff"></div>
<div class="acc">
<div class="ah">Informasi<svg class="cv" width="12" height="12" viewBox="0 0 12 12"><path d="M1.5 1.5 L6 5.5 L10.5 1.5 M1.5 6 L6 10 L10.5 6" fill="none" stroke="#4d6470" stroke-width="1.3"/></svg></div>
<div class="ah sel">Diizinkan (I)<svg class="cv" width="12" height="12" viewBox="0 0 12 12"><path d="M1.5 5.5 L6 1.5 L10.5 5.5 M1.5 10 L6 6 L10.5 10" fill="none" stroke="#35506a" stroke-width="1.3"/></svg></div>
<div class="lst"><div class="lw"><div class="li a">Rumah tunggal</div><div class="li">Rumah kopel</div><div class="li a">Rumah deret</div><div class="li">Rumah sederhana (kav min 72m2)</div><div class="li a">Rumah menengah (kav min 90m2)</div><div class="li">Rumah mewah (kav min 200m2)</div><div class="li a">Rumah susun sewa (Rusunawa)</div><div class="li">Rumah dinas</div><div class="li a">Rumah adat</div><div class="li">Panti jompo</div><div class="li a">Panti asuhan</div><div class="li">Kondominium</div><div class="li a">Paviliun</div></div>
<div class="sb2"><i class="up"></i><i class="th"></i><i class="dn"></i></div></div>
<div class="ah">Diizinkan Terbatas (T)<svg class="cv" width="12" height="12" viewBox="0 0 12 12"><path d="M1.5 1.5 L6 5.5 L10.5 1.5 M1.5 6 L6 10 L10.5 6" fill="none" stroke="#4d6470" stroke-width="1.3"/></svg></div><div class="ah">Diizinkan Dengan Bersyarat (B)<svg class="cv" width="12" height="12" viewBox="0 0 12 12"><path d="M1.5 1.5 L6 5.5 L10.5 1.5 M1.5 6 L6 10 L10.5 6" fill="none" stroke="#4d6470" stroke-width="1.3"/></svg></div><div class="ah">Diizinkan Terbatas dan Bersyarat (TB)<svg class="cv" width="12" height="12" viewBox="0 0 12 12"><path d="M1.5 1.5 L6 5.5 L10.5 1.5 M1.5 6 L6 10 L10.5 6" fill="none" stroke="#4d6470" stroke-width="1.3"/></svg></div><div class="ah">Tidak Diizinkan (X)<svg class="cv" width="12" height="12" viewBox="0 0 12 12"><path d="M1.5 1.5 L6 5.5 L10.5 1.5 M1.5 6 L6 10 L10.5 6" fill="none" stroke="#4d6470" stroke-width="1.3"/></svg></div><div class="ah">Intensitas<svg class="cv" width="12" height="12" viewBox="0 0 12 12"><path d="M1.5 1.5 L6 5.5 L10.5 1.5 M1.5 6 L6 10 L10.5 6" fill="none" stroke="#4d6470" stroke-width="1.3"/></svg></div><div class="ah">Jalur Garis Sempadan Bangunan<svg class="cv" width="12" height="12" viewBox="0 0 12 12"><path d="M1.5 1.5 L6 5.5 L10.5 1.5 M1.5 6 L6 10 L10.5 6" fill="none" stroke="#4d6470" stroke-width="1.3"/></svg></div>
</div>
<div class="sb"><i class="up"></i><i class="th" style="top:13px;height:584px"></i><i class="dn"></i></div>
</div>
</div>
<!--INFO-E-->
<!--MISC-S-->
<div id="topbox"><i></i></div>
<svg id="compass" width="70" height="76" viewBox="0 0 70 76"><g fill="none" stroke="#14587d" opacity=".85"><circle cx="35" cy="40" r="20" stroke-width="1.3"/><circle cx="35" cy="40" r="17.5" stroke-width=".5"/><path d="M35 12 L37 38 L63 40 L37 42 L35 78 L33 42 L6 40 L33 38 Z" fill="#14587d" stroke-width=".4"/><path d="M24 29 L46 51 M46 29 L24 51" stroke-width="1" opacity=".6"/></g><g font-family="Liberation Sans, sans-serif" font-size="5.5" font-weight="bold" fill="#14587d" opacity=".8"><text x="33" y="6">N</text><text x="-3" y="42">W</text><text x="70" y="42">E</text></g></svg>
<div id="scale"><div>1000 m</div></div>
<div id="lat" class="ll">Latitude</div>
<div id="lon" class="ll">Longitude</div>
<div id="go" class="bb">Go!!</div>
<div id="clr" class="bb">Clear</div>
<div id="botbox"></div>
<div id="ovb"><div>&raquo;</div></div>
<!--MISC-E-->
</body>
</html>
